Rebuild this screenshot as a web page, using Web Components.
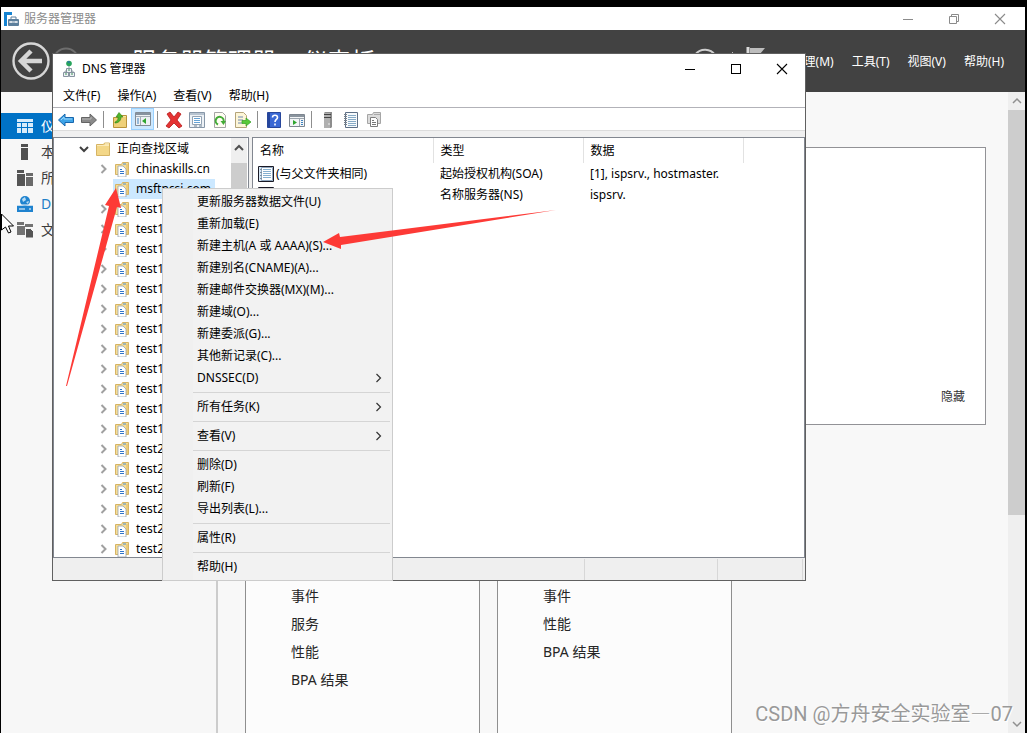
<!DOCTYPE html>
<html lang="zh-CN">
<head>
<meta charset="utf-8">
<title>服务器管理器</title>
<style>
  html, body { height: 100%; }
  body { margin: 0; background: #000; overflow: hidden; font: 12px/20px "Noto Sans", "Noto Sans CJK SC", sans-serif; color: #000; }
</style>
</head>
<body>
<desk-top></desk-top>

<script>
const ICONS = {
  app: [16, 16, '<path d="M1 1h8v3H4v11H1z" fill="#1583d2"/><rect x="5" y="8" width="11" height="7" rx="1" fill="#5c7f9c"/><path d="M8 8V6h5v2" fill="none" stroke="#5c7f9c"/><path d="M6 11h9M8 10v2M13 10v2" stroke="#fff"/>'],
  back: [40, 40, '<circle cx="20" cy="20" r="17.5" fill="none" stroke="#d6d6d6" stroke-width="2.4"/><path d="M31 20H11M20 10L10 20l10 10" fill="none" stroke="#d6d6d6" stroke-width="4.500"/>'],
  next: [28, 28, '<circle cx="14" cy="14" r="12.5" fill="none" stroke="#6e6e6e" stroke-width="2"/><path d="M7 14h13M15 9l5 5-5 5" fill="none" stroke="#6e6e6e" stroke-width="2"/>'],
  reload: [28, 28, '<path d="M24 8A12 12 0 1 0 26 15" fill="none" stroke="#cfcfcf" stroke-width="2"/>'],
  flag: [22, 28, '<path d="M2 0v28" stroke="#dcdcdc" stroke-width="3"/><path d="M4 1h15l-5 6 5 6H4z" fill="#bdbdbd"/>'],
  min: [12, 12, '<path d="M1 6.5h10" stroke="currentColor"/>'],
  max: [12, 12, '<rect x="1.5" y="1.5" width="9" height="9" fill="none" stroke="currentColor"/>'],
  restore: [12, 12, '<path d="M1.500 3.500h7v7h-7zM3.500 3.500v-2h7v7h-2" fill="none" stroke="currentColor"/>'],
  close: [12, 12, '<path d="M1 1l10 10M11 1L1 11" stroke="currentColor" stroke-width="1.100"/>'],
  dash: [16, 16, '<path d="M0 1h16v3H0zM0 5h4v4H0zM5 5h5v4H5zM11 5h5v4h-5zM0 10h4v5H0zM5 10h5v5H5zM11 10h5v5h-5z" fill="#d9ecfa"/>'],
  local: [16, 16, '<path d="M4 0h7v3H4zM4 4h7v12H4z" fill="#505050"/>'],
  all: [16, 16, '<path d="M0 0h7v3H0zM0 4h8v12H0z" fill="#555"/><path d="M9 3h7v3H9zM9 7h7v9H9z" fill="#6a6a6a"/>'],
  globe: [16, 16, '<circle cx="8" cy="5" r="5" fill="#1f83cf"/><path d="M5 3l3-2 1 3-3 2zM9 6l3-1-1 3z" fill="#b8dcf4"/><path d="M0 9.500h16V16H0z" fill="#1f83cf"/><path d="M0 9h16" stroke="#f7f7f7"/><path d="M2 13h6M12 13h2" stroke="#fff"/>'],
  files: [16, 16, '<path d="M0 0h7v3H0zM0 4h8v9H0zM8 2h8v3H8z" fill="#737373"/><path d="M8.500 6.500h5l3 3V16h-8z" fill="#555" stroke="#f7f7f7"/>'],
  dns: [14, 18, '<path d="M7 6v5M3 14v-3h8v3" fill="none" stroke="#9aa5ae"/><circle cx="7" cy="3.500" r="2.800" fill="#27a45c"/><path d="M5 2l2-1 1 2z" fill="#2c63c0"/><path d="M4.500 8.500h5v4h-5zM1.500 12.500h5v4h-5zM7.500 12.500h5v4h-5z" fill="#eef1f4" stroke="#8793a0"/><path d="M6 10h2M3 14h2M9 14h2" stroke="#3b9459"/>'],
  tback: [16, 16, '<path d="M.500 8L7 2v3.500h8.500v5H7V14z" fill="#3ea4e8" stroke="#1766ad"/><path d="M3 8l3-3v2h8" fill="none" stroke="#9ad6fa"/>'],
  tnext: [16, 16, '<path d="M15.500 8L9 2v3.500H.500v5H9V14z" fill="#8a8a8a" stroke="#646464"/><path d="M1 7h9V5" fill="none" stroke="#b5b5b5"/>'],
  up: [16, 16, '<path d="M1.500 5.500h5l1-2h7v12h-13z" fill="#efd078" stroke="#b99339"/><path d="M9 4.500h5" stroke="#fae7a8"/><path d="M3 10c3-1 3-3 3-5H4l3-4.500L11 5H9c0 4-3 6-6 6z" fill="#51b52b" stroke="#318314" stroke-width=".6"/>'],
  console: [18, 16, '<path d="M1.500 1.500h15v13h-15z" fill="#eef1f4" stroke="#828c97"/><path d="M2 3h14" stroke="#8793a0" stroke-width="2"/><path d="M2 5.500h14M6.500 6v8" stroke="#a4adb6"/><path d="M3 8h2M3 10h2M3 12h2" stroke="#3f83c0"/><path d="M12 7v6l-4-3z" fill="#2fa52f"/>'],
  del: [18, 18, '<path d="M2 3l3-2 4 5 4-5 3 2-4 6 5 6-3 2-5-5-5 5-3-2 5-6z" fill="#e53333" stroke="#b51a1a" stroke-width=".8"/>'],
  props: [16, 16, '<path d="M.500.500h15v15H.500z" fill="#eef2f6" stroke="#8797a8"/><path d="M1 2h14" stroke="#b8c4d0" stroke-width="2"/><path d="M3.500 4.500h9v8h-9z" fill="#fff" stroke="#93a3b3"/><path d="M5 6.500h6M5 8.500h6M5 10.500h6" stroke="#63a2d6"/><path d="M5 14h3M10 14h3" stroke="#6f8293"/>'],
  refresh: [16, 16, '<path d="M2.500.500h8l3 3v12h-11z" fill="#fffdf3" stroke="#a5a5a5"/><path d="M6 12.500A4 4 0 1 1 11.500 10" fill="none" stroke="#43ab36" stroke-width="2"/><path d="M8.500 9h5.500l-2.500 4z" fill="#43ab36"/>'],
  export: [18, 16, '<path d="M1.500.500h8l3 3v12h-11z" fill="#fdf6d8" stroke="#b4a47a"/><path d="M4 5h5M4 8h5M4 11h4" stroke="#6d87b0"/><path d="M8 8.500h4V6l5 4-5 4v-2.500H8z" fill="#58c93a" stroke="#349f22" stroke-width=".7"/>'],
  help: [14, 16, '<path d="M.500.500h13v15H.500z" fill="#3a68d4" stroke="#28479b"/><path d="M1 1h2v14H1z" fill="#25469e"/><path d="M5.500 5.500c0-3 5-3 5 0 0 2-2.500 2-2.500 4.500M8 11.500v2" fill="none" stroke="#fff" stroke-width="1.600"/>'],
  action: [18, 16, '<path d="M1.500 2.500h15v12h-15z" fill="#f3f5f7" stroke="#7d8690"/><path d="M2 4h14" stroke="#8a949e" stroke-width="2"/><path d="M2 6.500h14M11.500 7v7" stroke="#9ba5ae"/><path d="M5 8v5l4-2.500z" fill="#2fa52f"/><path d="M13 8.500h2M13 10.500h2M13 12.500h2" stroke="#3f83c0"/>'],
  server: [10, 16, '<path d="M1 1l1-1h7v15l-1 1H1z" fill="#8d8d8d"/><path d="M1 1h6v15H1z" fill="#b0b0b0"/><path d="M1 2.500h7M1 5.500h7" stroke="#444"/><path d="M5 12h2" stroke="#eee"/>'],
  zone: [14, 16, '<path d="M1.500.500h12v15h-12z" fill="#f7fafc" stroke="#5d6f86"/><path d="M4 3.500h8M4 5.500h8M4 7.500h8M4 9.500h8M4 11.500h8M4 13.500h8" stroke="#86aac6"/><path d="M0 2.500h3M0 4.500h3M0 6.500h3M0 8.500h3M0 10.500h3M0 12.500h3" stroke="#77818c"/>'],
  copies: [16, 16, '<path d="M1.500 2.500h5l1-2h7v11h-13z" fill="#dcdcdc" stroke="#a5a5a5"/><path d="M8 2.500h6" stroke="#aaa"/><path d="M4.500 5.500h5l2 2v7h-7z" fill="#fff" stroke="#7d7d7d"/><path d="M6 8.500h2M6 10.500h4M6 12.500h4" stroke="#777"/>'],
  folder: [16, 16, '<path d="M1.500 3.500h7l1-1.500h5v12.500h-13z" fill="#f3d788" stroke="#d6b464"/><path d="M2 4.500h12" stroke="#fbeab8"/><path d="M10 3h4" stroke="#fff7d6"/>'],
  zfolder: [16, 16, '<path d="M1.500 3.500h6l1-2h6v12h-13z" fill="#f6dd96" stroke="#d6b464"/><path d="M13 3v10" stroke="#e2b95c"/><path d="M9 3h3" stroke="#4d8ed0"/><path d="M4 5h5l3 3v8H4z" fill="#fff" stroke="#9aa5ae" stroke-width=".8"/><path d="M6 8.500h2M6 10.500h4M6 12.500h4" stroke="#2f74c8"/>'],
  record: [16, 16, '<path d="M.500.500h15v15H.500z" fill="#d8e8f6" stroke="#1a1a26"/><path d="M3.500 1.500h11v13h-11z" fill="#fff" stroke="#8fa6bd"/><path d="M5 3.500h8M5 5.500h8M5 7.500h8M5 9.500h8M5 11.500h8" stroke="#86b0d0"/><path d="M2 3.500h2M2 6.500h2M2 9.500h2M2 12.500h2" stroke="#7d8f9f"/>'],
  right: [8, 12, '<path d="M1.500 2l4 4-4 4" fill="none" stroke="currentColor" style="stroke-width:var(--w,1)"/>'],
  down: [12, 8, '<path d="M2 2l4 4 4-4" fill="none" stroke="currentColor" style="stroke-width:var(--w,1)"/>'],
  upc: [12, 8, '<path d="M2 6l4-4 4 4" fill="none" stroke="currentColor" style="stroke-width:var(--w,1)"/>'],
  cursor: [14, 22, '<path d="M1.500 1v16l4-3 3 6 2.500-1-2.500-6h5z" fill="#fff" stroke="#000"/>']
};

function define(name, render) {
  customElements.define(name, class extends HTMLElement {
    constructor() { super(); this.attachShadow({ mode: 'open' }); }
    connectedCallback() { this.shadowRoot.innerHTML = render(this); }
  });
}
const attr = (el, n) => el.getAttribute(n) || '';

define('ui-icon', el => {
  const [w, h, body] = ICONS[attr(el, 'name')];
  return `<style>:host{display:inline-flex;flex:none}svg{display:block}</style>
    <svg width="${w}" height="${h}" viewBox="0 0 ${w} ${h}" aria-hidden="true">${body}</svg>`;
});

define('scroll-bar', () => `<style>
    :host{display:flex;flex-direction:column;flex:none;width:17px;background:#efefef;color:#909090;--w:1.5}
    .end{display:flex;justify-content:center;align-items:center;flex:none;box-sizing:border-box;height:var(--end,18px);padding-bottom:var(--lift,0)}
    .track{flex:1}.thumb{height:67%;background:#cdcdcd}
  </style><div class="end"><ui-icon name="upc"></ui-icon></div>
  <div class="track"><div class="thumb"></div></div>
  <div class="end"><ui-icon name="down"></ui-icon></div>`);

define('window-controls', el => `<style>
    :host{display:flex;margin-left:auto}
    button{all:unset;display:flex;align-items:center;justify-content:center;width:46px}
  </style>
  <button aria-label="最小化"><ui-icon name="min"></ui-icon></button>
  <button aria-label="最大化"><ui-icon name="${attr(el, 'mid')}"></ui-icon></button>
  <button aria-label="关闭"><ui-icon name="close"></ui-icon></button>`);

define('nav-item', el => `<style>
    :host{display:block;font-size:14px;color:#3c3c3c}
    :host([current]){background:#0072c6;color:#fff}
    :host([link]){color:#1f7fc8}
    a{display:flex;align-items:center;gap:8px;height:26px;padding-left:16px;color:inherit;text-decoration:none;white-space:nowrap}
  </style><a href="#"><ui-icon name="${attr(el, 'icon')}"></ui-icon><slot></slot></a>`);

define('role-tile', () => `<style>
    :host{display:block;box-sizing:border-box;width:235px;border:1px solid #8f8f8f;background:#fcfcfc;padding:91px 45px 0}
    ::slotted(a){display:block;font-size:14px;line-height:28px;color:#262626;text-decoration:none}
  </style><slot></slot>`);

define('server-manager', () => `<style>
    :host{display:flex;flex-direction:column;height:100%;background:#f7f7f7}
    .title{display:flex;align-items:center;flex:none;height:23px;padding-left:2px;gap:5px;background:#fff;color:#8b8b8b}
    window-controls{align-self:stretch;color:#8b8b8b;padding-right:2px}
    header{display:flex;align-items:center;flex:none;box-sizing:border-box;height:62px;padding:0 21px 0 10px;background:#424242;color:#fff}
    .next{margin-left:1px}
    h1{margin:0 0 0 52px;font-size:24px;line-height:32px;font-weight:400;white-space:nowrap}
    h1 span{padding:0 4px}
    .tools{display:flex;align-items:center;gap:13px;margin-left:auto}
    .bar{width:1px;height:18px;background:#bbb}
    nav{display:flex;gap:18px;margin-left:24px;padding-top:2px}
    nav a{color:#fff;text-decoration:none}
    .body{display:flex;flex:1;min-height:0}
    aside{box-sizing:border-box;flex:none;width:217px;padding-top:21px;border-right:2px solid #ccc}
    main{flex:1;min-width:0;overflow:hidden;padding:55px 22px 0 27px;background:#f8f8f8}
    .welcome{display:flex;justify-content:flex-end;align-items:flex-end;box-sizing:border-box;height:278px;padding:17px 20px;border:1px solid #929296;background:#fff}
    .welcome a{color:#333;text-decoration:none}
    .tiles{display:flex;gap:17px;margin-top:65px}
    role-tile{min-height:320px}
  </style>
  <div class="title"><ui-icon name="app"></ui-icon><span>服务器管理器</span><window-controls mid="restore"></window-controls></div>
  <header>
    <ui-icon name="back"></ui-icon><ui-icon class="next" name="next"></ui-icon>
    <h1>服务器管理器<span> · </span>仪表板</h1>
    <div class="tools"><ui-icon name="reload"></ui-icon><span class="bar"></span><ui-icon name="flag"></ui-icon></div>
    <nav><a href="#">管理(M)</a><a href="#">工具(T)</a><a href="#">视图(V)</a><a href="#">帮助(H)</a></nav>
  </header>
  <div class="body">
    <aside>
      <nav-item icon="dash" current>仪表板</nav-item>
      <nav-item icon="local">本地服务器</nav-item>
      <nav-item icon="all">所有服务器</nav-item>
      <nav-item icon="globe" link>DNS</nav-item>
      <nav-item icon="files">文件和存储</nav-item>
    </aside>
    <main>
      <section class="welcome"><a href="#">隐藏</a></section>
      <div class="tiles">
        <role-tile><a href="#">事件</a><a href="#">服务</a><a href="#">性能</a><a href="#">BPA 结果</a></role-tile>
        <role-tile><a href="#">事件</a><a href="#">性能</a><a href="#">BPA 结果</a></role-tile>
      </div>
    </main>
    <scroll-bar></scroll-bar>
  </div>`);

define('tool-bar', () => {
  const groups = [['tback:后退', 'tnext:前进'], ['up:上一级', 'console:控制台树'], ['del:删除', 'props:属性', 'refresh:刷新', 'export:导出列表'],
    ['help:帮助', 'action:操作窗格'], ['server:新建服务器', 'zone:新建区域', 'copies:新建记录']];
  return `<style>
    :host{display:flex;height:22px;padding-left:1px;border-top:1px solid #b2b2b8;border-bottom:1px solid #dcdcdc;background:#fff}
    button{all:unset;box-sizing:border-box;display:flex;align-items:center;justify-content:center;width:23px;padding-top:2px}
    .on{background:#cce8ff;border:1px solid #99d1ff;padding-top:0}
    i{width:1px;margin:3px 4px 2px 3px;background:#8e8e8e}
  </style>` + groups.map(g => g.map(b => {
    const [n, t] = b.split(':');
    return `<button aria-label="${t}"${n === 'console' ? ' class="on"' : ''}><ui-icon name="${n}"></ui-icon></button>`;
  }).join('')).join('<i></i>');
});

define('tree-item', el => {
  const root = el.hasAttribute('root'), sel = el.hasAttribute('selected');
  return `<style>
    :host{display:flex;align-items:center;height:20px;padding-left:${root ? 24 : 45}px;white-space:nowrap}
    .tw{display:flex;justify-content:center;flex:none;width:${root ? 12 : 10}px;color:${root ? '#404040' : '#a0a0a0'};--w:2}
    .lab{display:flex;align-items:center;gap:6px;height:20px;margin-left:4px;padding:0 4px 0 1px;background:${sel ? '#cce8ff' : 'none'}}
  </style><span class="tw">${sel ? '' : `<ui-icon name="${root ? 'down' : 'right'}"></ui-icon>`}</span>
  <span class="lab"><ui-icon name="${root ? 'folder' : 'zfolder'}"></ui-icon><slot></slot></span>`;
});

define('record-list', () => `<style>
    :host{display:block;background:#fff}
    table{width:100%;table-layout:fixed;border-collapse:collapse}
    th,td{box-sizing:border-box;padding:0 0 0 7px;font-weight:400;text-align:left;white-space:nowrap}
    th{height:25px;border-right:1px solid #e2e2e2}th:last-child{border:0}
    td{height:21px}td:first-child{padding-left:5px}
    .n{display:flex;align-items:center;gap:2px;height:21px}
    .a{width:180px}.b{width:150px}.c{width:160px}
  </style>
  <table><thead><tr><th class="a">名称</th><th class="b">类型</th><th class="c">数据</th><th></th></tr></thead>
  <tbody>
    <tr><td><span class="n"><ui-icon name="record"></ui-icon>(与父文件夹相同)</span></td><td>起始授权机构(SOA)</td><td>[1], ispsrv., hostmaster.</td><td></td></tr>
    <tr><td><span class="n"><ui-icon name="record"></ui-icon></span></td><td>名称服务器(NS)</td><td>ispsrv.</td><td></td></tr>
  </tbody></table>`);

define('dns-window', () => `<style>
    :host{display:block;border:1px solid #606060;background:#f0f0f0}
    .title{display:flex;align-items:center;height:29px;padding-left:9px;gap:6px;background:#fff}
    window-controls{align-self:stretch}
    nav{display:flex;align-items:center;gap:17px;box-sizing:border-box;height:24px;padding:2px 0 0 10px;background:#fff}
    nav a{color:#000;text-decoration:none}
    .panes{display:flex;gap:3px;margin-top:6px}
    .tree{display:flex;box-sizing:border-box;flex:none;width:196px;overflow:hidden;border:1px solid #828790;background:#fff}
    .rows{flex:1;min-width:0;padding-top:1px;margin-bottom:-2px}
    scroll-bar{--end:25px;--lift:5px;--w:2;width:16px;margin-right:1px;color:#505050}
    record-list{flex:1;min-width:0;border:1px solid #828790}
    footer{display:flex;height:21px;padding:1px 2px 0 0;background:#efefef}
    footer span{box-sizing:border-box;border-right:1px solid #d7d7d7}
    .f{flex:1}.g{width:133px}.h{width:85px}
  </style>
  <div class="title"><ui-icon name="dns"></ui-icon><span>DNS 管理器</span><window-controls mid="max"></window-controls></div>
  <nav><a href="#">文件(F)</a><a href="#">操作(A)</a><a href="#">查看(V)</a><a href="#">帮助(H)</a></nav>
  <tool-bar></tool-bar>
  <div class="panes">
    <div class="tree"><div class="rows">
      <tree-item root>正向查找区域</tree-item>
      <tree-item>chinaskills.cn</tree-item>
      <tree-item selected>msftncsi.com</tree-item>
      ${'<tree-item>test1</tree-item>'.repeat(12)}${'<tree-item>test2</tree-item>'.repeat(6)}
    </div><scroll-bar></scroll-bar></div>
    <record-list></record-list>
  </div>
  <footer><span class="f"></span><span class="g"></span><span class="h"></span></footer>`);

define('menu-item', el => `<style>
    :host{display:block}
    button{all:unset;box-sizing:border-box;display:flex;align-items:center;justify-content:space-between;width:100%;height:22px;padding:0 9px 0 34px;white-space:nowrap}
    ui-icon{color:#333;--w:1.2}
  </style><button role="menuitem"><span><slot></slot></span>${el.hasAttribute('sub') ? '<ui-icon name="right"></ui-icon>' : ''}</button>`);

define('context-menu', () => `<style>
    :host{display:block;box-sizing:border-box;width:231px;padding:2px 0;border:1px solid #ccc;background:linear-gradient(to right,#f0f0f0 30px,#f2f2f2 30px)}
    hr{height:1px;margin:3px 2px 3px 30px;border:0;background:#d5d5d5}
  </style>
  <menu-item>更新服务器数据文件(U)</menu-item><menu-item>重新加载(E)</menu-item>
  <menu-item>新建主机(A 或 AAAA)(S)...</menu-item><menu-item>新建别名(CNAME)(A)...</menu-item>
  <menu-item>新建邮件交换器(MX)(M)...</menu-item><menu-item>新建域(O)...</menu-item>
  <menu-item>新建委派(G)...</menu-item><menu-item>其他新记录(C)...</menu-item>
  <menu-item sub>DNSSEC(D)</menu-item><hr>
  <menu-item sub>所有任务(K)</menu-item><hr>
  <menu-item sub>查看(V)</menu-item><hr>
  <menu-item>删除(D)</menu-item><menu-item>刷新(F)</menu-item><menu-item>导出列表(L)...</menu-item><hr>
  <menu-item>属性(R)</menu-item><hr>
  <menu-item>帮助(H)</menu-item>`);

define('desk-top', () => `<style>
    :host{display:block;position:relative;box-sizing:border-box;height:100vh;padding:7px 2px 0 1px}
    dns-window{position:absolute;left:52px;right:221px;top:53px}
    context-menu{position:absolute;left:162px;top:188px}
    .arrows{position:absolute;left:0;top:0;pointer-events:none}
    .cursor{position:absolute;left:0;top:213px}
    .mark{position:absolute;right:14px;bottom:5px;font:20px/28px Roboto,"Noto Sans CJK SC",sans-serif;color:#999;text-shadow:1px 1px 0 #fff;white-space:nowrap}
    .mark span{font-family:"Noto Sans CJK SC",sans-serif}
  </style>
  <server-manager></server-manager>
  <dns-window></dns-window>
  <context-menu role="menu"></context-menu>
  <svg class="arrows" width="600" height="400" viewBox="0 0 600 400" aria-hidden="true">
    <path d="M66 386L109 206L105 205L116 188L121 208L117 207L67 386z" fill="#fd3a36"/>
    <path d="M556 210L340 237L339 233L323 242L341 249L341 245z" fill="#fd3a36"/>
  </svg>
  <ui-icon class="cursor" name="cursor"></ui-icon>
  <div class="mark">CSDN @<span>方舟安全实验室—</span>07</div>`);
</script>
</body>
</html>
